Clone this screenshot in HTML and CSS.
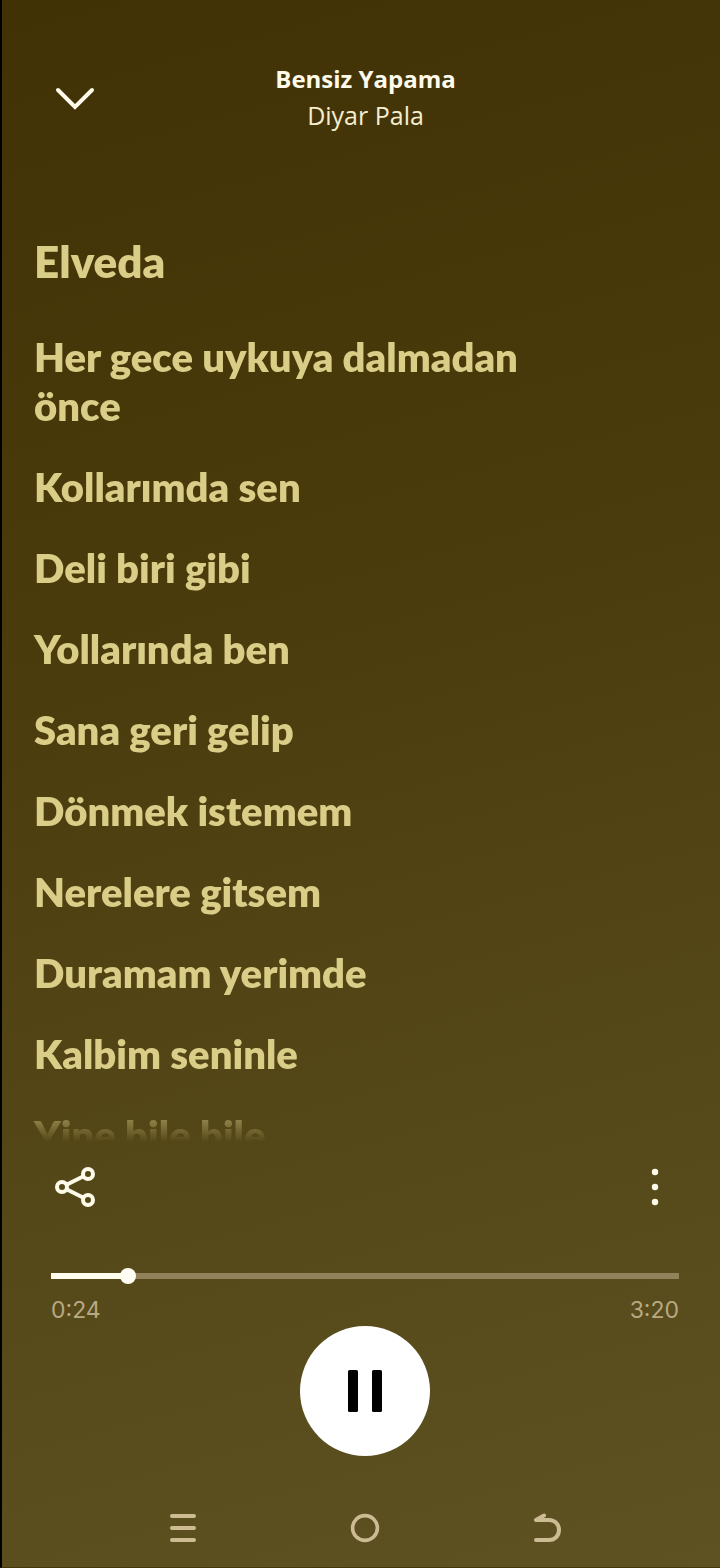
FILE: index.html
```html
<!DOCTYPE html>
<html lang="tr">
	<head>
		<meta charset="utf-8" />
		<meta name="viewport" content="width=device-width, initial-scale=1">
		<title>Bensiz Yapama - Diyar Pala</title>
		<link rel="stylesheet" href="styles.css">
	</head>
	<body>
		<header class="header">
			<button type="button" class="icon-btn" aria-label="Kapat">
				<svg width="40" height="24" viewBox="0 0 40 24" fill="none" stroke="currentColor" stroke-width="4" stroke-linecap="round">
					<path d="M3 3L20 20L37 3"/>
				</svg>
			</button>
			<div class="track-info">
				<h1 class="track-title">Bensiz Yapama</h1>
				<p class="track-artist">Diyar Pala</p>
			</div>
		</header>

		<main class="lyrics">
			<p class="line first">Elveda</p>
			<p class="line">Her gece uykuya dalmadan önce</p>
			<p class="line">Kollarımda sen</p>
			<p class="line">Deli biri gibi</p>
			<p class="line">Yollarında ben</p>
			<p class="line">Sana geri gelip</p>
			<p class="line">Dönmek istemem</p>
			<p class="line">Nerelere gitsem</p>
			<p class="line">Duramam yerimde</p>
			<p class="line">Kalbim seninle</p>
			<p class="line">Yine bile bile</p>
		</main>

		<section class="player">
			<div class="actions">
				<button type="button" class="icon-btn" aria-label="Paylaş">
					<svg width="42" height="42" viewBox="0 0 42 42" fill="none" stroke="currentColor" stroke-width="4">
						<circle cx="8" cy="21" r="5"/>
						<circle cx="34" cy="8" r="5"/>
						<circle cx="34" cy="34" r="5"/>
						<path d="M12 19L30 10M12 23L30 32"/>
					</svg>
				</button>
				<button type="button" class="icon-btn" aria-label="Diğer seçenekler">
					<svg width="8" height="38" viewBox="0 0 8 38" fill="currentColor">
						<circle cx="4" cy="4" r="3.2"/>
						<circle cx="4" cy="19" r="3.2"/>
						<circle cx="4" cy="34" r="3.2"/>
					</svg>
				</button>
			</div>

			<input type="range" class="seek" min="0" max="200" step="any" value="22.6" style="--played: 12%" aria-label="Şarkı konumu">
			<div class="times">
				<span>0:24</span>
				<span>3:20</span>
			</div>

			<button type="button" class="pause-btn" aria-label="Duraklat">
				<svg width="34" height="44" viewBox="0 0 34 44" fill="currentColor">
					<rect x="0" y="1" width="10" height="42" rx="1.5"/>
					<rect x="24" y="1" width="10" height="42" rx="1.5"/>
				</svg>
			</button>
		</section>

		<!-- sistem gezinme çubuğu -->
		<nav class="system-nav">
			<button type="button" class="icon-btn" aria-label="Son uygulamalar">
				<svg width="30" height="32" viewBox="0 0 30 32" fill="none" stroke="currentColor" stroke-width="4" stroke-linecap="round">
					<path d="M4 4H26M4 16H26M4 28H26"/>
				</svg>
			</button>
			<button type="button" class="icon-btn" aria-label="Ana ekran">
				<svg width="30" height="32" viewBox="0 0 30 32" fill="none" stroke="currentColor" stroke-width="3.6">
					<circle cx="15" cy="16" r="12.4"/>
				</svg>
			</button>
			<button type="button" class="icon-btn" aria-label="Geri">
				<svg width="30" height="32" viewBox="0 0 30 32" fill="none" stroke="currentColor" stroke-width="4" stroke-linecap="round" stroke-linejoin="round">
					<path d="M12 3.5L4 8H17C23 8 27 12.5 27 18S23 28 17 28H4"/>
				</svg>
			</button>
		</nav>
	</body>
</html>
```

FILE: styles.css
```css
* {
	box-sizing: border-box;
}
body {
	margin: 0;
	height: 100vh;
	display: flex;
	flex-direction: column;
	font-family: Lato, "Noto Sans", sans-serif;
	color: #fffbea;
	background: linear-gradient(165deg, #403205 0%, #4b3c0d 40%, #564919 72%, #5f5222 100%);
	border-left: 2px solid #000;
	border-bottom: 1px solid #453808;
}
h1, p {
	margin: 0;
}
.icon-btn {
	display: flex;
	padding: 0;
	border: none;
	background: none;
	color: inherit;
	cursor: pointer;
}
.header {
	display: grid;
	grid-template-columns: 48px 1fr 48px;
	align-items: end;
	padding: 61px 44px 24px 53px;
}
.header .icon-btn {
	padding-bottom: 22px;
}
.track-info {
	text-align: center;
	font-family: "Open Sans", sans-serif;
	font-size: 25px;
	line-height: 36px;
}
.track-title {
	font-size: 24px;
	font-weight: 700;
}
.track-artist {
	color: #f6edcf;
}
.lyrics {
	flex: 1;
	min-height: 0;
	padding: 78px 180px 0 32px;
	overflow-y: auto;
	scrollbar-width: none;
	mask-image: linear-gradient(to top, transparent 0, #000 50px);
}
.line {
	margin-bottom: 32px;
	font-size: 40px;
	font-weight: 800;
	line-height: 49px;
	color: #dacd87;
}
.first {
	margin-bottom: 46px;
	font-size: 44px;
	line-height: 52px;
}
.player {
	display: flex;
	flex-direction: column;
	padding: 24px 41px 0 49px;
}
.actions {
	display: flex;
	justify-content: space-between;
	align-items: center;
	padding: 0 20px 0 3px;
}
.seek {
	appearance: none;
	width: 100%;
	height: 16px;
	margin: 60px 0 0;
	border-radius: 2px;
	background: linear-gradient(to right, #fffdec var(--played), #92825b var(--played)) center / 100% 6px no-repeat;
	cursor: pointer;
}
.seek::-webkit-slider-thumb {
	appearance: none;
	width: 16px;
	height: 16px;
	border-radius: 50%;
	background: #fffef5;
}
.times {
	display: flex;
	justify-content: space-between;
	margin-top: 10px;
	font-family: Inter, sans-serif;
	font-size: 23px;
	line-height: 32px;
	color: #b8a983;
}
.pause-btn {
	display: flex;
	align-items: center;
	justify-content: center;
	align-self: center;
	width: 130px;
	height: 130px;
	padding: 0;
	border: none;
	border-radius: 50%;
	background: #fff;
	color: #000;
	cursor: pointer;
}
.system-nav {
	display: flex;
	justify-content: space-between;
	padding: 56px 158px 23px 166px;
	color: #cdbb94;
}
```
